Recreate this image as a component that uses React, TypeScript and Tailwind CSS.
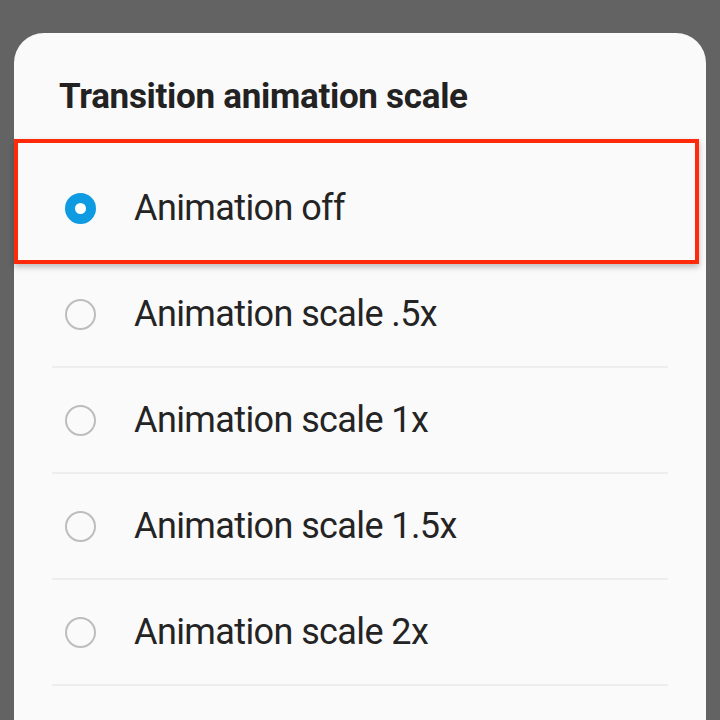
import React from "react";

const options = [
  "Animation off",
  "Animation scale .5x",
  "Animation scale 1x",
  "Animation scale 1.5x",
  "Animation scale 2x",
];

export default function App() {
  return (
    <div
      className="w-[720px] h-[720px] overflow-hidden bg-[#636363]"
      style={{ fontFamily: "Roboto, 'Noto Sans', sans-serif" }}
    >
      <div className="relative mx-[14px] mt-[33px] h-[700px] rounded-t-[30px] bg-[#fafafa]">
        <div className="pl-[45px] pt-[44px] pb-[39px]">
          <h1 className="text-[35px] leading-[40px] font-bold text-[#222222] tracking-[-0.3px]">
            Transition animation scale
          </h1>
        </div>
        <div className="flex flex-col">
          {options.map((label, i) => (
            <div key={label} className="flex flex-col">
              {i > 0 && <div className="mx-[38px] h-[2px] bg-[#ededed]" />}
              <div className="flex h-[104px] items-center">
                <div className="ml-[51px] flex h-[31px] w-[31px] items-center justify-center">
                  {i === 0 ? (
                    <div className="h-[31px] w-[31px] rounded-full border-[10px] border-[#0e9be2] bg-white" />
                  ) : (
                    <div className="h-[31px] w-[31px] rounded-full border-2 border-[#bdbdbd]" />
                  )}
                </div>
                <span className="ml-[38px] text-[36px] leading-[40px] text-[#242424] tracking-[-0.6px]">
                  {label}
                </span>
              </div>
            </div>
          ))}
          <div className="mx-[38px] h-[2px] bg-[#ededed]" />
        </div>
        <div className="pointer-events-none absolute left-0 top-[106px] h-[125px] w-[685px] border-[4px] border-[#ff2a0a] shadow-[0_3px_6px_rgba(0,0,0,0.25)]" />
      </div>
    </div>
  );
}
